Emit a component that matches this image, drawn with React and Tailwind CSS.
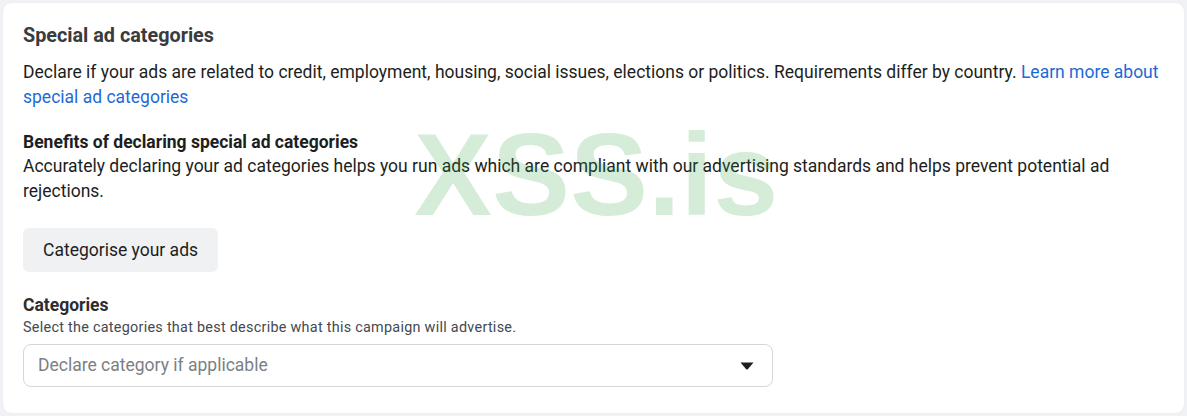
export default function App() {
  return (
    <div
      className="relative min-h-[416px] w-full bg-[#f0f2f5] p-[3px] pb-[2px]"
      style={{ fontFamily: 'Roboto, "Noto Sans", Arial, sans-serif' }}
    >
      <div className="h-[410px] w-[1181px] rounded-lg bg-white px-5 pt-[21px] shadow-[0_0_1px_rgba(0,0,0,0.15)]">
        <h2 className="text-[19.8px] font-bold leading-[24px] text-[#3a3b3c]">
          Special ad categories
        </h2>
        <p className="mt-[12px] text-[17.5px] leading-[25px] text-[#1c1e21]">
          Declare if your ads are related to credit, employment, housing, social issues, elections
          or politics. Requirements differ by country.{' '}
          <a href="#" className="text-[#1d6ad6]">
            Learn more about special ad categories
          </a>
        </p>

        <h3 className="mt-[20px] text-[17.5px] font-bold leading-[24px] text-[#1c1e21]">
          Benefits of declaring special ad categories
        </h3>
        <p className="text-[17.5px] leading-[25px] text-[#1c1e21]">
          Accurately declaring your ad categories helps you run ads which are compliant with our
          advertising standards and helps prevent potential ad rejections.
        </p>

        <button
          type="button"
          className="mt-[24px] h-[44px] rounded-md bg-[#f0f1f2] px-5 text-[17.5px] text-[#1c1e21]"
        >
          Categorise your ads
        </button>

        <h3 className="mt-[21px] text-[17.5px] font-bold leading-[24px] text-[#2c2d2e]">
          Categories
        </h3>
        <p className="mt-[1px] text-[14.4px] leading-[20px] tracking-[0.27px] text-[#444950]">
          Select the categories that best describe what this campaign will advertise.
        </p>

        <div className="mt-[6px] flex h-[43px] w-[750px] items-center justify-between rounded-lg border border-[#d4d6d9] pl-[14px] pr-[18px]">
          <span className="text-[17.5px] text-[#7b7f84]">Declare category if applicable</span>
          <svg width="14" height="8" viewBox="0 0 14 8" aria-hidden="true">
            <path d="M0.5 0.5 H13.5 L8 7 Q7 8 6 7 Z" fill="#1c1e21" />
          </svg>
        </div>
      </div>

      <div
        className="pointer-events-none absolute left-[414px] top-[116px] select-none text-[117px] font-bold leading-none text-[rgba(40,160,60,0.2)]"
        style={{ fontFamily: '"Liberation Sans", Arial, sans-serif' }}
      >
        XSS.is
      </div>
    </div>
  );
}
